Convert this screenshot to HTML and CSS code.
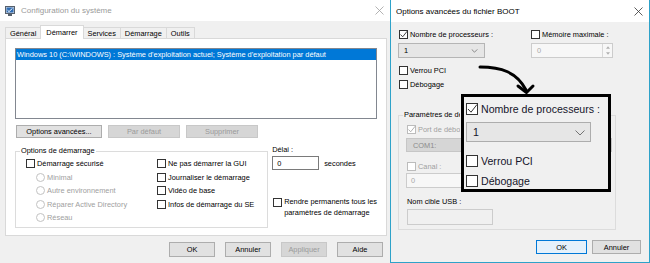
FILE: index.html
```html
<!DOCTYPE html>
<html lang="fr">
<head>
    <meta charset="UTF-8">
    <title>Configuration du système</title>
    <link rel="stylesheet" href="styles.css">
</head>
<body>
<div class="desk">
    <section class="win win-main">
        <div class="titlebar">
            <svg class="app-icon" viewBox="0 0 10 10">
                <rect x="0.5" y="0.5" width="9" height="7" fill="#d8dde4" stroke="#56606c"/>
                <rect x="1.5" y="1.5" width="7" height="5" fill="#2f6db5"/>
                <path d="M2.5 4.2 L4 5.6 L7.5 2.3" stroke="#fff" fill="none"/>
                <rect x="3" y="8" width="4" height="2" fill="#56606c"/>
            </svg>
            <span class="title">Configuration du système</span>
            <svg class="close" viewBox="0 0 9 9"><path d="M0.5 0.5 L8.5 8.5 M8.5 0.5 L0.5 8.5"/></svg>
        </div>
        <div class="win-body">
            <div class="tabs">
                <div class="tab">Général</div>
                <div class="tab on">Démarrer</div>
                <div class="tab">Services</div>
                <div class="tab">Démarrage</div>
                <div class="tab">Outils</div>
            </div>
            <div class="tabpanel">
                <div class="listbox">
                    <div class="list-item sel">Windows 10 (C:\WINDOWS) : Système d'exploitation actuel; Système d'exploitation par défaut</div>
                </div>
                <div class="btn-row">
                    <button class="btn btn-adv">Options avancées...</button>
                    <button class="btn btn-mid" disabled>Par défaut</button>
                    <button class="btn btn-mid" disabled>Supprimer</button>
                </div>
                <div class="opts">
                    <fieldset class="group boot-group">
                        <legend>Options de démarrage</legend>
                        <div class="cols">
                            <div class="col col-left">
                                <div class="row"><span class="cb"></span>Démarrage sécurisé</div>
                                <div class="row radio off"><span class="rb"></span>Minimal</div>
                                <div class="row radio off"><span class="rb"></span>Autre environnement</div>
                                <div class="row radio off"><span class="rb"></span>Réparer Active Directory</div>
                                <div class="row radio off"><span class="rb"></span>Réseau</div>
                            </div>
                            <div class="col">
                                <div class="row"><span class="cb"></span>Ne pas démarrer la GUI</div>
                                <div class="row"><span class="cb"></span>Journaliser le démarrage</div>
                                <div class="row"><span class="cb"></span>Vidéo de base</div>
                                <div class="row"><span class="cb"></span>Infos de démarrage du SE</div>
                            </div>
                        </div>
                    </fieldset>
                    <div class="side">
                        <div class="side-label">Délai :</div>
                        <div class="delay">
                            <span class="field delay-field">0</span>
                            <span>secondes</span>
                        </div>
                        <div class="keep">
                            <span class="cb"></span>
                            <span>Rendre permanents tous les<br>paramètres de démarrage</span>
                        </div>
                    </div>
                </div>
            </div>
            <div class="footer">
                <button class="btn btn-foot">OK</button>
                <button class="btn btn-foot">Annuler</button>
                <button class="btn btn-foot" disabled>Appliquer</button>
                <button class="btn btn-foot">Aide</button>
            </div>
        </div>
    </section>

    <section class="win win-boot">
        <div class="titlebar">
            <span class="title">Options avancées du fichier BOOT</span>
            <svg class="close" viewBox="0 0 9 9"><path d="M0.5 0.5 L8.5 8.5 M8.5 0.5 L0.5 8.5"/></svg>
        </div>
        <div class="win-body">
            <div class="grid-top">
                <div class="row short"><span class="cb"><svg viewBox="0 0 9 9"><path d="M1.5 4.5 L3.7 6.8 L8.2 1.2"/></svg></span>Nombre de processeurs :</div>
                <div class="row short mem"><span class="cb"></span>Mémoire maximale :</div>
                <div class="select cpu-select">1<svg class="chev" viewBox="0 0 8 5"><path d="M0.5 0.5 L4 4 L7.5 0.5"/></svg></div>
                <div class="spin">
                    <span>0</span>
                    <span class="spin-btns">
                        <svg viewBox="0 0 5 3"><path d="M0 3 L2.5 0 L5 3 Z"/></svg>
                        <svg viewBox="0 0 5 3"><path d="M0 0 L2.5 3 L5 0 Z"/></svg>
                    </span>
                </div>
            </div>
            <div class="flags">
                <div class="row tall"><span class="cb"></span>Verrou PCI</div>
                <div class="row tall"><span class="cb"></span>Débogage</div>
            </div>
            <fieldset class="group dbg-group">
                <legend><span class="clip legend-clip">Paramètres de débogage globaux</span></legend>
                <div class="dbg-inner">
                    <div class="row mid off"><span class="cb"><svg viewBox="0 0 9 9"><path d="M1.5 4.5 L3.7 6.8 L8.2 1.2"/></svg></span><span class="clip port-clip">Port de débogage :</span></div>
                    <div class="com-bar">COM1:</div>
                    <div class="row mid off chan"><span class="cb"></span>Canal :</div>
                    <div class="field chan-field">0</div>
                    <div class="usb-label">Nom cible USB :</div>
                    <div class="field usb-field"></div>
                </div>
            </fieldset>
            <div class="footer boot-footer">
                <button class="btn btn-ok">OK</button>
                <button class="btn btn-cancel">Annuler</button>
            </div>
        </div>

        <svg class="arrow" viewBox="0 0 258 100">
            <path d="M89 67 C110 67 126 72 135 90"/>
            <path d="M127 86 L135.5 92.5 L142 86"/>
        </svg>

        <div class="zoom-box">
            <div class="zrow"><span class="cb"><svg viewBox="0 0 12 12"><path d="M2 6 L5 9.2 L11 1.5"/></svg></span>Nombre de processeurs :</div>
            <div class="select zselect">1<svg class="chev" viewBox="0 0 10 6"><path d="M0.5 0.5 L5 5 L9.5 0.5"/></svg></div>
            <div class="zrow ztall zfirst"><span class="cb"></span>Verrou PCI</div>
            <div class="zrow ztall"><span class="cb"></span>Débogage</div>
        </div>
    </section>
</div>
</body>
</html>
```

FILE: styles.css
```css
* {
    box-sizing: border-box;
}

body {
    margin: 0;
    width: 650px;
    height: 263px;
    overflow: hidden;
    background: #f0f0f0;
    font-family: "Liberation Sans", Arial, sans-serif;
    font-size: 7.4px;
    color: #000;
}

.desk {
    display: flex;
    height: 263px;
}

.win {
    position: relative;
    display: flex;
    flex-direction: column;
    background: #f0f0f0;
    height: 263px;
}

.win-main {
    width: 390px;
}

.win-boot {
    width: 260px;
    border: 1px solid #2ea2c9;
    border-top: none;
}

/* title bars */
.titlebar {
    height: 21px;
    flex: none;
    display: flex;
    align-items: center;
    background: #fff;
    font-size: 8px;
    padding: 0 6px 0 5px;
}

.win-main .titlebar {
    color: #9a9a9a;
}

.win-boot .titlebar {
    height: 22px;
}

.app-icon {
    width: 10px;
    height: 10px;
    margin-right: 6px;
}

.titlebar .title {
    flex: 1;
}

.close {
    width: 9px;
    height: 9px;
    stroke: #333;
    stroke-width: 0.8;
}

.win-main .close {
    stroke: #a0a0a0;
}

/* left window */
.win-main .win-body {
    flex: 1;
    display: flex;
    flex-direction: column;
    padding: 4px 3px 0 5px;
}

.tabs {
    height: 13px;
    display: flex;
    align-items: flex-end;
}

.tab {
    height: 11px;
    display: flex;
    align-items: center;
    padding: 0 4px;
    border: 1px solid #d9d9d9;
    border-bottom: none;
    margin-right: -1px;
}

.tab.on {
    height: 14px;
    padding: 0 5px;
    margin-bottom: -1px;
    background: #fff;
    position: relative;
    z-index: 1;
}

.tabpanel {
    height: 198px;
    background: #fff;
    border: 1px solid #d9d9d9;
    padding: 9px 9px 0 9px;
}

.listbox {
    height: 71px;
    border: 1px solid #828790;
}

.list-item {
    height: 11px;
    line-height: 11px;
    padding-left: 1px;
    white-space: nowrap;
}

.list-item.sel {
    background: #0078d7;
    color: #fff;
}

.btn {
    font: inherit;
    color: #000;
    background: #e1e1e1;
    border: 1px solid #adadad;
    padding: 0;
    margin: 0;
}

.btn:disabled {
    background: #d6d6d6;
    border-color: #c8c8c8;
    color: #9a9a9a;
}

.btn-row {
    display: flex;
    gap: 6px;
    margin-top: 6px;
    margin-left: 1px;
}

.btn-row .btn {
    height: 13px;
}

.btn-adv {
    width: 86px;
}

.btn-mid {
    width: 72px;
}

.opts {
    display: flex;
    gap: 4px;
    margin-top: 9px;
}

.group {
    margin: 0;
    min-width: 0;
    border: 1px solid #dcdcdc;
    padding: 0 0 0 4px;
}

.group legend {
    padding: 0 1px;
    line-height: 8px;
}

.boot-group {
    width: 257px;
    height: 81px;
}

.cols {
    display: flex;
    margin-left: 6px;
    padding-top: 2px;
}

.col-left {
    width: 131px;
}

.row {
    display: flex;
    align-items: center;
    height: 13.5px;
    white-space: nowrap;
}

.cb {
    position: relative;
    width: 9px;
    height: 9px;
    flex: none;
    border: 1px solid #333;
    background: #fff;
    margin-right: 2px;
}

.cb svg {
    position: absolute;
    left: -1px;
    top: -1px;
    width: 9px;
    height: 9px;
    fill: none;
    stroke: #333;
    stroke-width: 0.9;
}

.rb {
    width: 9px;
    height: 9px;
    flex: none;
    border: 1px solid #c2c2c2;
    border-radius: 50%;
    background: #fff;
    margin-right: 2px;
}

.radio {
    margin-left: 10px;
}

.off {
    color: #a0a0a0;
}

.off .cb {
    border-color: #bcbcbc;
}

.off .cb svg {
    stroke: #a8a8a8;
}

.side {
    width: 106px;
}

.side-label {
    line-height: 8px;
    margin-top: -1px;
}

.delay {
    display: flex;
    align-items: center;
    gap: 5px;
    margin-top: 2px;
}

.field {
    height: 14px;
    border: 1px solid #7a7a7a;
    background: #fff;
    display: flex;
    align-items: center;
    padding-left: 4px;
}

.delay-field {
    width: 47px;
}

.keep {
    display: flex;
    align-items: flex-start;
    line-height: 11px;
    margin-top: 26px;
    margin-left: 1px;
    white-space: nowrap;
}

.keep .cb {
    margin-top: 1.5px;
}

.footer {
    display: flex;
    justify-content: flex-end;
    gap: 10px;
    padding: 6px 4px 0 0;
}

.btn-foot {
    width: 46px;
    height: 15px;
}

/* right window */
.win-boot .win-body {
    flex: 1;
    display: flex;
    flex-direction: column;
    padding: 7px 8px 0 7px;
}

.grid-top {
    display: grid;
    grid-template-columns: 133px 1fr;
    row-gap: 4px;
}

.row.short {
    height: 10px;
    margin-left: 1px;
}

.row.mem {
    margin-left: 0;
}

.select {
    position: relative;
    height: 15px;
    display: flex;
    align-items: center;
    padding-left: 5px;
    background: #e6e6e6;
    border: 1px solid #b5b5b5;
}

.cpu-select {
    width: 87px;
}

.chev {
    position: absolute;
    right: 6px;
    top: 5px;
    width: 7px;
    height: 4px;
    fill: none;
    stroke: #555;
    stroke-width: 0.8;
}

.spin {
    width: 82px;
    height: 15px;
    display: flex;
    align-items: center;
    justify-content: space-between;
    padding-left: 5px;
    border: 1px solid #cccccc;
    background: #f7f7f7;
    color: #a8a8a8;
}

.spin-btns {
    width: 10px;
    height: 13px;
    display: flex;
    flex-direction: column;
    align-items: center;
    justify-content: space-around;
    border-left: 1px solid #d8d8d8;
}

.spin-btns svg {
    width: 4px;
    height: 3px;
    fill: #b0b0b0;
}

.flags {
    margin-top: 5px;
}

.row.tall {
    height: 14px;
    margin-left: 1px;
}

.dbg-group {
    width: 218px;
    height: 119px;
    margin-top: 20px;
}

.clip {
    display: inline-block;
    overflow: hidden;
    white-space: nowrap;
    vertical-align: top;
}

.legend-clip {
    max-width: 56px;
}

.port-clip {
    max-width: 42px;
}

.dbg-inner {
    margin-left: 4px;
    padding-top: 5px;
}

.row.mid {
    height: 11px;
}

.com-bar {
    width: 206px;
    height: 14px;
    margin-top: 3px;
    margin-left: -1px;
    display: flex;
    align-items: center;
    padding-left: 6px;
    background: #d6d6d6;
    border: 1px solid #c6c6c6;
    color: #8c8c8c;
}

.chan {
    margin-top: 9px;
}

.chan-field {
    width: 60px;
    height: 15px;
    margin-top: 1px;
    margin-left: -1px;
    border-color: #cccccc;
    background: #f7f7f7;
    color: #a8a8a8;
}

.usb-label {
    height: 10px;
    line-height: 10px;
    margin-top: 9px;
}

.usb-field {
    width: 86px;
    height: 16px;
    margin-top: 2px;
    border-color: #cccccc;
    background: #f0f0f0;
}

.boot-footer {
    gap: 5px;
    padding: 10px 0 0 0;
}

.btn-ok {
    width: 51px;
    height: 14px;
    border-color: #0078d7;
    background: #e5f1fb;
}

.btn-cancel {
    width: 49px;
    height: 14px;
}

/* annotation drawn over the dialog */
.arrow {
    position: absolute;
    left: 0;
    top: 0;
    width: 258px;
    height: 100px;
    fill: none;
    stroke: #000;
    stroke-width: 3;
    stroke-linecap: round;
    stroke-linejoin: round;
}

.zoom-box {
    position: absolute;
    left: 70px;
    top: 94px;
    width: 150px;
    height: 98px;
    border: 3px solid #000;
    background: #f0f0f0;
    padding: 6px 0 0 2px;
    font-size: 10.6px;
    color: #14142a;
}

.zrow {
    display: flex;
    align-items: center;
    height: 12px;
    white-space: nowrap;
}

.zrow .cb {
    width: 12px;
    height: 12px;
    margin-right: 3px;
}

.zrow .cb svg {
    width: 12px;
    height: 12px;
    stroke-width: 1;
}

.zselect {
    width: 125px;
    height: 20px;
    margin-top: 7px;
    padding-left: 6px;
    background: #e6e6e6;
    border-color: #adadad;
}

.zselect .chev {
    right: 5px;
    top: 7px;
    width: 10px;
    height: 6px;
}

.zrow.ztall {
    height: 20px;
}

.zrow.zfirst {
    margin-top: 9px;
}
```
